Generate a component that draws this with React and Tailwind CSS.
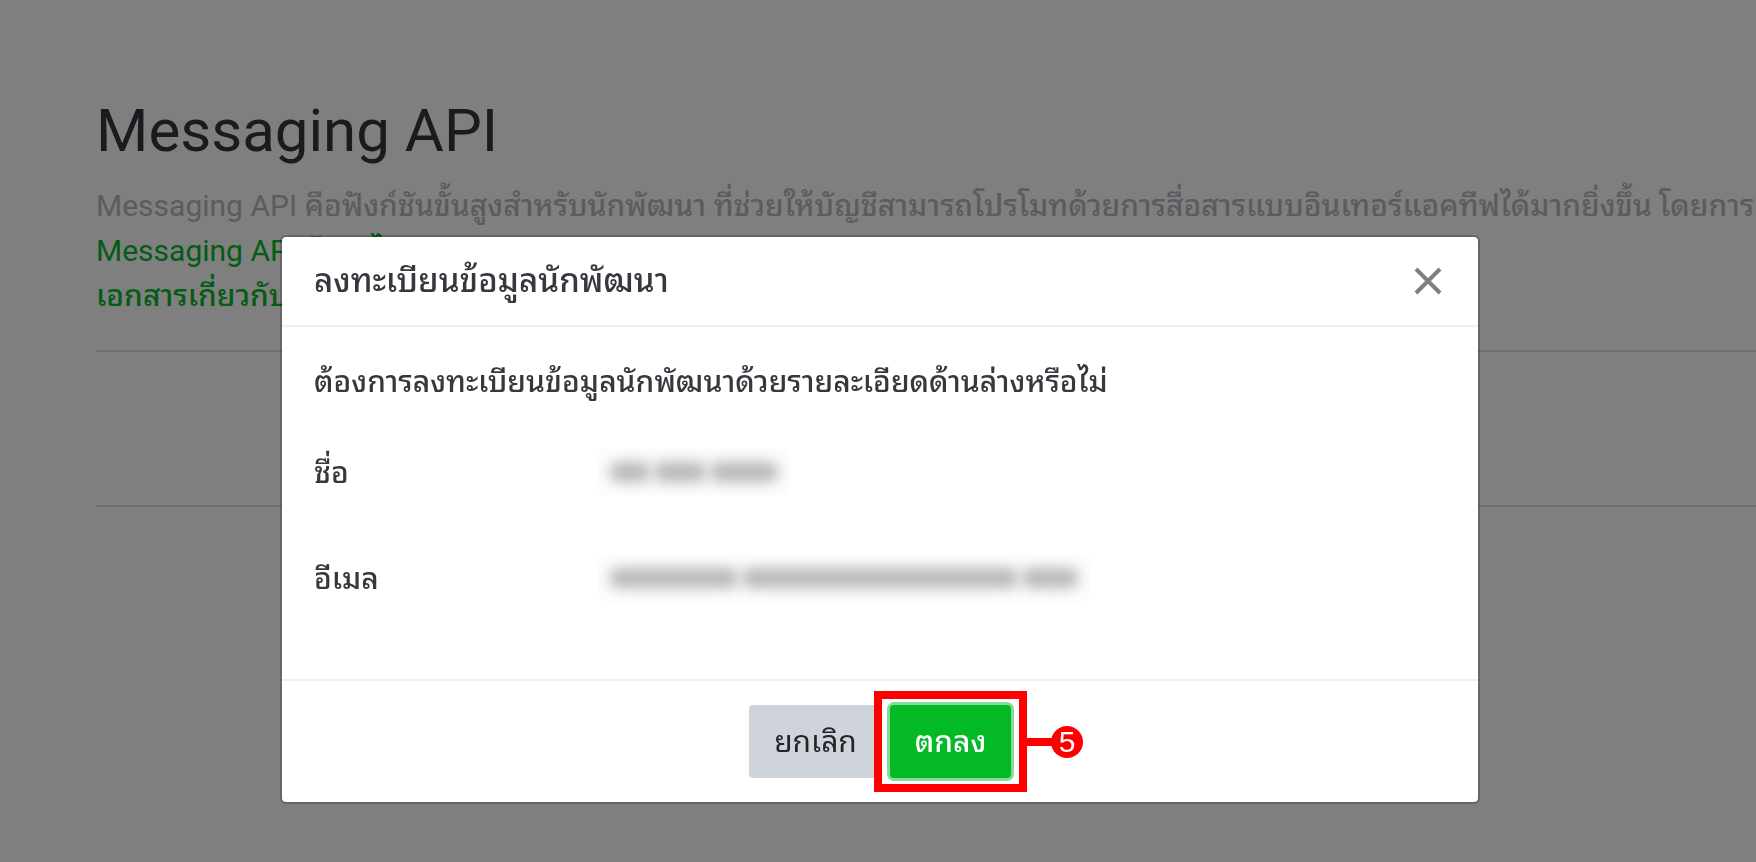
const links = [
  { latin: "Messaging API ", thai: "คืออะไร", href: "#about" },
  { latin: "", thai: "เอกสารเกี่ยวกับ", href: "#docs" },
];

// Personal details stay masked: each entry is a list of word widths
const fields = [
  { label: "ชื่อ", words: ["w-10", "w-13", "w-17"] },
  { label: "อีเมล", words: ["w-32", "w-[276px]", "w-14"] },
];

function MaskedValue({ words }) {
  return (
    <span className="inline-flex h-12 items-center gap-1 overflow-hidden bg-[#fdfdfd] px-3">
      {words.map((width) => (
        <span key={width} className={`${width} h-5 rounded-lg bg-[#b4b6b8] blur-[7px]`} />
      ))}
    </span>
  );
}

function CloseIcon() {
  return (
    <svg width="28" height="28" viewBox="0 0 28 28" fill="none" aria-hidden="true">
      <path d="M2 2L26 26M26 2L2 26" stroke="#7f7f7f" strokeWidth="4" />
    </svg>
  );
}

function Page() {
  return (
    <main className="pt-[95px] pl-24">
      <h1 className="text-[60px] leading-[72px] text-[#32363c]">Messaging API</h1>
      <p className="mt-4 text-[30px] leading-[45px] whitespace-nowrap text-[#b4b8be]">
        Messaging API{" "}
        <span className="font-medium">
          คือฟังก์ชันขั้นสูงสำหรับนักพัฒนา ที่ช่วยให้บัญชีสามารถโปรโมทด้วยการสื่อสารแบบอินเทอร์แอคทีฟได้มากยิ่งขึ้น โดยการ
        </span>
      </p>
      <ul className="text-[30px] leading-[45px]">
        {links.map((link) => (
          <li key={link.href}>
            <a href={link.href} className="text-[#08b92c]">
              {link.latin}
              <span className="font-medium">{link.thai}</span>
            </a>
          </li>
        ))}
      </ul>
      <div className="mt-8 h-[157px] border-y-2 border-[#dcdfe3]" />
    </main>
  );
}

function RegisterDialog() {
  return (
    <div className="fixed inset-0 flex items-start justify-center bg-black/50 pt-[235px] pl-1">
      <div
        role="dialog"
        aria-labelledby="dialog-title"
        className="w-full max-w-[1200px] rounded-md border-2 border-black/20 bg-white bg-clip-padding text-[#35383d]"
      >
        <header className="flex h-[90px] items-center justify-between border-b-2 border-[#efefef] pr-9 pl-8">
          <h2 id="dialog-title" className="text-[33px] leading-[48px] font-medium">
            ลงทะเบียนข้อมูลนักพัฒนา
          </h2>
          <button type="button" aria-label="ปิด">
            <CloseIcon />
          </button>
        </header>

        <div className="px-8 pt-8 pb-[77px] text-[30px] leading-[45px] font-medium">
          <p>ต้องการลงทะเบียนข้อมูลนักพัฒนาด้วยรายละเอียดด้านล่างหรือไม่</p>
          <dl className="mt-11 flex flex-col gap-[58px]">
            {fields.map((field) => (
              <div key={field.label} className="grid h-12 grid-cols-[284px_1fr] items-center">
                <dt>{field.label}</dt>
                <dd className="flex">
                  <MaskedValue words={field.words} />
                </dd>
              </div>
            ))}
          </dl>
        </div>

        <footer className="flex items-center justify-center gap-2 border-t-2 border-[#efefef] py-6 text-[30px] leading-[45px]">
          <button type="button" className="h-[73px] w-[133px] rounded bg-[#ced4da] text-[#212529]">
            ยกเลิก
          </button>
          <div className="relative">
            {/* Step marker around the confirm button */}
            <div className="absolute -inset-x-4 -inset-y-3.5 border-8 border-[#fe0000] bg-white" />
            <div className="absolute top-1/2 left-full ml-4 flex -translate-y-1/2 items-center">
              <span className="h-2 w-7 bg-[#fe0000]" />
              <span className="-ml-1 flex size-8 items-center justify-center rounded-full bg-[#fe0000] font-['Liberation_Sans',sans-serif] text-white">
                5
              </span>
            </div>
            <button
              type="button"
              className="relative h-[73px] w-[121px] rounded bg-[#04b926] font-medium text-white ring-3 ring-[#86dc92]"
            >
              ตกลง
            </button>
          </div>
        </footer>
      </div>
    </div>
  );
}

export default function App() {
  return (
    <div className="min-h-screen overflow-hidden bg-white font-[Roboto,'Noto_Sans_Thai_Looped','Loma','Noto_Sans_Thai','Noto_Sans',sans-serif]">
      <Page />
      <RegisterDialog />
    </div>
  );
}
